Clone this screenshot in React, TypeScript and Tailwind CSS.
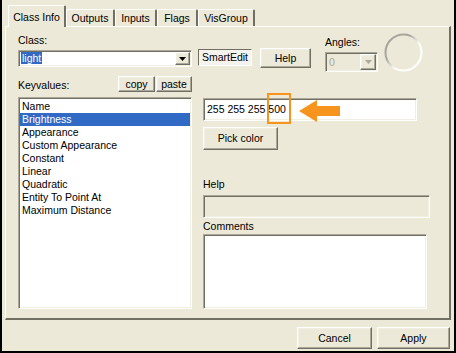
import React from "react";

const sunken =
  "border border-t-[#ACA899] border-l-[#ACA899] border-b-white border-r-white shadow-[inset_1px_1px_0_#716F64,inset_-1px_-1px_0_#F1EFE2]";
const raised =
  "border border-t-white border-l-white border-b-[#716F64] border-r-[#716F64] shadow-[inset_-1px_-1px_0_#ACA899,inset_1px_1px_0_#F1EFE2]";

const keyvalues = [
  "Name",
  "Brightness",
  "Appearance",
  "Custom Appearance",
  "Constant",
  "Linear",
  "Quadratic",
  "Entity To Point At",
  "Maximum Distance",
];

function Arrow({ disabled }: { disabled?: boolean }) {
  return (
    <svg width="7" height="4" viewBox="0 0 7 4">
      <path d="M0 0h7L3.5 4z" fill={disabled ? "#ACA899" : "#000"} />
    </svg>
  );
}

function Btn({ w, h, children, className = "" }: { w: string; h: string; children: React.ReactNode; className?: string }) {
  return (
    <div className={`${raised} ${w} ${h} ${className} flex items-center justify-center bg-[#ECE9D8]`}>
      {children}
    </div>
  );
}

function Tab({ label, active, w }: { label: string; active?: boolean; w: string }) {
  return active ? (
    <div className={`${w} relative z-10 mb-[-1px] flex h-[22px] items-start justify-center rounded-t-[2px] border-l border-r-2 border-t border-l-white border-r-[#716F64] border-t-white bg-[#ECE9D8] pt-[5px]`}>
      {label}
    </div>
  ) : (
    <div className={`${w} flex h-[17px] items-start justify-center rounded-t-[2px] border-l border-r-2 border-t border-l-white border-r-[#716F64] border-t-white pt-[2px]`}>
      {label}
    </div>
  );
}

export default function App() {
  return (
    <div
      className="flex h-[353px] w-[456px] flex-col border-x-2 border-b-2 border-black bg-[#ECE9D8] text-[10.5px] leading-[13px] text-black"
      style={{ fontFamily: '"Liberation Sans", Arial, sans-serif' }}
    >
      {/* tabs */}
      <div className="flex h-[26px] items-end pl-[6px]">
        <Tab label="Class Info" active w="w-[58px]" />
        <Tab label="Outputs" w="w-[49px]" />
        <Tab label="Inputs" w="w-[42px]" />
        <Tab label="Flags" w="w-[41px]" />
        <Tab label="VisGroup" w="w-[57px]" />
      </div>

      {/* panel */}
      <div className="mx-[3px] h-[294px] border-b-2 border-l border-r-2 border-t border-b-[#716F64] border-l-white border-r-[#716F64] border-t-white pl-[12px] pt-[6px]">
        <div className="flex h-[40px] items-start">
          <div className="w-[174px]">
            <div className="h-[14px] leading-[14px]">Class:</div>
            <div className={`${sunken} mt-[3px] flex h-[17px] items-center bg-white pl-[2px] pr-[1px]`}>
              <div className="flex-1">
                <span className="bg-[#316AC5] px-[1px] text-white">light</span>
              </div>
              <Btn w="w-[15px]" h="h-[13px]">
                <Arrow />
              </Btn>
            </div>
          </div>
          <div className="ml-[6px] mt-[16px] flex h-[17px] w-[54px] items-center justify-center border border-b-white border-l-[#716F64] border-r-white border-t-[#716F64] bg-[#F4F3EE]">
            SmartEdit
          </div>
          <Btn w="w-[51px]" h="h-[20px]" className="ml-[8px] mt-[15px]">
            Help
          </Btn>
          <div className="ml-[14px] w-[53px]">
            <div className="mt-[2px] h-[14px] leading-[14px]">Angles:</div>
            <div className={`${sunken} mt-[3px] flex h-[20px] items-center bg-[#ECE9D8] pl-[3px] pr-[1px] text-[#ACA899]`}>
              <div className="flex-1">0</div>
              <Btn w="w-[16px]" h="h-[16px]">
                <Arrow disabled />
              </Btn>
            </div>
          </div>
          <svg className="ml-[6px]" width="39" height="39" viewBox="0 0 39 39">
            <defs>
              <linearGradient id="ring" x1="0" y1="0" x2="1" y2="1">
                <stop offset="0.35" stopColor="#A7A59B" />
                <stop offset="0.6" stopColor="#FFFFFF" />
              </linearGradient>
            </defs>
            <circle cx="19.5" cy="19.5" r="18" fill="none" stroke="url(#ring)" strokeWidth="2" />
          </svg>
        </div>

        <div className="mt-[3px] flex">
          {/* left column */}
          <div className="w-[174px]">
            <div className="flex h-[16px] items-end">
              <div className="flex-1 leading-[13px]">Keyvalues:</div>
              <Btn w="w-[37px]" h="h-[16px]">copy</Btn>
              <Btn w="w-[36px]" h="h-[16px]" className="ml-[1px]">paste</Btn>
            </div>
            <div className={`${sunken} mt-[5px] h-[212px] bg-white px-[1px] pt-[2px]`}>
              {keyvalues.map((k, i) => (
                <div
                  key={k}
                  className={`h-[13px] pl-[2px] leading-[13px] ${i === 1 ? "bg-[#316AC5] text-white" : ""}`}
                >
                  {k}
                </div>
              ))}
            </div>
          </div>

          {/* right column */}
          <div className="ml-[11px] w-[227px]">
            <div className={`${sunken} relative mt-[22px] flex h-[23px] w-[214px] items-center bg-white pl-[3px]`}>
              255 255 255 500
              <div className="absolute left-[63px] top-[-6px] h-[31px] w-[24px] border-2 border-[#F7941D]" />
              <svg className="absolute left-[95px] top-[1px]" width="42" height="22" viewBox="0 0 42 22">
                <path d="M0 11L18 0V6H41V16H18V22Z" fill="#F7941D" />
              </svg>
            </div>
            <Btn w="w-[75px]" h="h-[23px]" className="mt-[6px]">
              Pick color
            </Btn>
            <div className="mt-[27px] h-[14px] leading-[14px]">Help</div>
            <div className={`${sunken} mt-[4px] h-[23px] w-[227px] bg-[#ECE9D8]`} />
            <div className="mt-[1px] h-[14px] leading-[14px]">Comments</div>
            <div className={`${sunken} mt-[1px] h-[75px] w-[224px] bg-white`} />
          </div>
        </div>
      </div>

      {/* bottom buttons */}
      <div className="mt-[7px] flex justify-end gap-[5px] pr-[4px]">
        <Btn w="w-[75px]" h="h-[22px]">Cancel</Btn>
        <Btn w="w-[73px]" h="h-[22px]">Apply</Btn>
      </div>
    </div>
  );
}
